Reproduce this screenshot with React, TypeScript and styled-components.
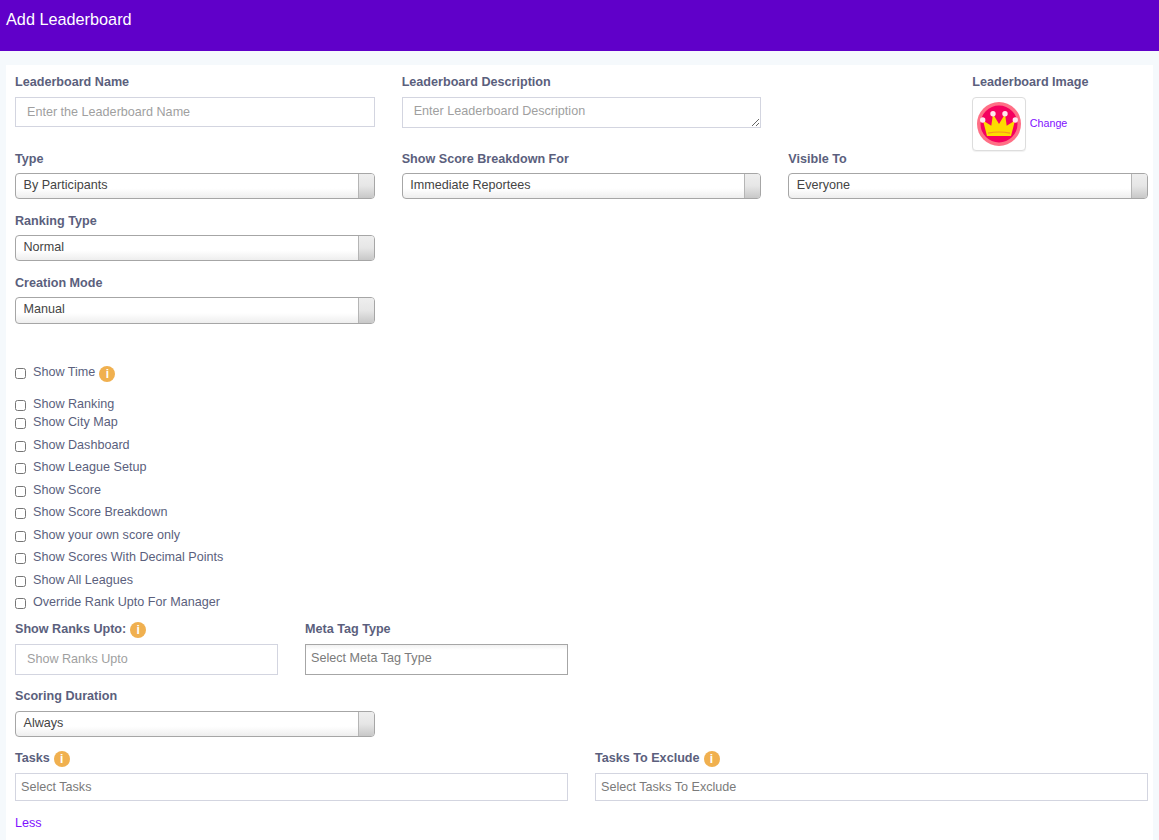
import React from "react";
import styled, { createGlobalStyle } from "styled-components";

const Global = createGlobalStyle`
  html, body { margin: 0; padding: 0; background: #f5f9fc; }
  body { font-family: "Liberation Sans", Arial, sans-serif; overflow: hidden; }
  * { box-sizing: border-box; }
`;

const Page = styled.div`
  width: 1159px;
  height: 840px;
  overflow: hidden;
  display: flex;
  flex-direction: column;
`;
const Header = styled.header`
  height: 51px;
  flex: none;
  background: #6000c9;
  color: #fff;
  font-size: 16.25px;
  line-height: 18px;
  padding: 10px 6px 0;
`;
const Panel = styled.main`
  margin: 14px 6px 0;
  padding: 9px 5px 0 9px;
  background: #fff;
  flex: 1;
  display: flex;
  flex-direction: column;
`;
const Grid3 = styled.div<{ $top?: number }>`
  display: grid;
  grid-template-columns: repeat(3, 1fr);
  column-gap: 27px;
  margin-top: ${(p) => p.$top ?? 0}px;
`;
const Grid2 = styled.div<{ $top?: number; $w?: number }>`
  display: grid;
  grid-template-columns: 1fr 1fr;
  column-gap: 27px;
  width: ${(p) => p.$w ?? 1133}px;
  margin-top: ${(p) => p.$top ?? 0}px;
`;
const Label = styled.div<{ $gap?: number }>`
  display: flex;
  align-items: flex-start;
  font-size: 12.6px;
  font-weight: 700;
  line-height: 17px;
  height: 15px;
  color: #5b5f7d;
  margin-bottom: ${(p) => p.$gap ?? 8}px;
`;
const TextInput = styled.input<{ $h?: number }>`
  display: block;
  width: 100%;
  height: ${(p) => p.$h ?? 30}px;
  border: 1px solid #d3d5e0;
  padding: 0 11px ${(p) => (p.$h ? 2 : 0)}px;
  font: 12.6px "Liberation Sans", Arial, sans-serif;
  background: #fff;
  outline: none;
  &::placeholder { color: #a09f9f; opacity: 1; }
`;
const TextArea = styled.textarea`
  display: block;
  width: 100%;
  height: 31px;
  border: 1px solid #d3d5e0;
  padding: 5px 11px;
  font: 12.6px/16px "Liberation Sans", Arial, sans-serif;
  outline: none;
  resize: vertical;
  &::placeholder { color: #a09f9f; opacity: 1; }
`;
const SelectBox = styled.div<{ $h?: number }>`
  display: flex;
  height: ${(p) => p.$h ?? 26}px;
  border: 1px solid #a6a6a6;
  border-radius: 4px;
  overflow: hidden;
  background: linear-gradient(to bottom, #fff 0%, #fff 60%, #eeeeee 100%);
  font-size: 12.6px;
  line-height: 22px;
  color: #444;
`;
const SelectText = styled.div`
  flex: 1;
  padding-left: 7.5px;
`;
const SelectArrow = styled.div`
  width: 16px;
  border-left: 1px solid #b5b5b5;
  background: linear-gradient(to bottom, #eeeeee 0%, #e6e6e6 50%, #c8c8c8 100%);
`;
const FieldStack = styled.div<{ $top?: number }>`
  width: 359.67px;
  margin-top: ${(p) => p.$top ?? 0}px;
`;
const ImageField = styled.div`
  padding-left: 184px;
  height: 0;
`;
const ImageRow = styled.div`
  display: flex;
  align-items: center;
`;
const Thumb = styled.div`
  width: 54px;
  height: 54px;
  flex: none;
  border: 1px solid #ddd;
  border-radius: 4px;
  background: #fff;
  box-shadow: 0 1px 1px rgba(0, 0, 0, 0.06);
  display: flex;
  align-items: center;
  justify-content: center;
`;
const Change = styled.a`
  margin-left: 3.5px;
  margin-top: -2px;
  font-size: 10.7px;
  color: #7f11ff;
`;
const Checks = styled.div`
  margin-top: 41px;
`;
const CheckRow = styled.label<{ $h: number }>`
  display: flex;
  align-items: flex-start;
  height: ${(p) => p.$h}px;
  font-size: 12.6px;
  line-height: 15px;
  color: #5b5f7d;
`;
const Box = styled.input.attrs({ type: "checkbox" })`
  width: 11px;
  height: 11px;
  margin: 3px 7px 0 0;
  flex: none;
`;
const Info = styled.span`
  display: inline-flex;
  align-items: center;
  justify-content: center;
  width: 16px;
  height: 16px;
  border-radius: 50%;
  margin: 1px 0 0 4px;
  background: #f0b04f;
  color: #fff;
  font-size: 12px;
  font-weight: 700;
  line-height: 16px;
  flex: none;
`;
const MetaSelect = styled.div`
  height: 31px;
  border: 1px solid #a6a6a6;
  padding: 5px 5px 0;
  font-size: 12.6px;
  line-height: 16px;
  color: #7b7b7b;
  background: linear-gradient(to bottom, #f1f1f1 0, #fff 5px);
`;
const TokenInput = styled.div`
  height: 28px;
  border: 1px solid #d3d5e0;
  padding: 5px 5px 0;
  font-size: 12.6px;
  line-height: 16px;
  color: #7b7b7b;
`;
const LessLink = styled.a`
  display: block;
  margin-top: 15px;
  font-size: 12.6px;
  line-height: 15px;
  color: #7f11ff;
`;

const Crown = () => (
  <svg width="46" height="46" viewBox="0 0 46 46" aria-hidden="true">
    <circle cx="23" cy="23" r="22" fill="#ff6f86" />
    <circle cx="23" cy="23" r="18.5" fill="#f5005f" />
    <path d="M7 19.5 L15.3 24.7 L17 13 L23 23 L29 13 L30.7 24.7 L39 19.5 L35 35 L11 35 Z" fill="#fddb00" />
    <path d="M12 32.2 Q23 29.8 34 32.2" fill="none" stroke="#f7931e" strokeWidth="1.2" />
    <circle cx="6.7" cy="19" r="2.7" fill="#ffe6ee" />
    <circle cx="17" cy="12.8" r="2.7" fill="#ffe6ee" />
    <circle cx="29" cy="12.8" r="2.7" fill="#ffe6ee" />
    <circle cx="39.3" cy="19" r="2.7" fill="#ffe6ee" />
  </svg>
);

const Select = ({ value, h }: { value: string; h?: number }) => (
  <SelectBox $h={h}>
    <SelectText>{value}</SelectText>
    <SelectArrow />
  </SelectBox>
);

const checks: { text: string; h: number; info?: boolean }[] = [
  { text: "Show Time", h: 32, info: true },
  { text: "Show Ranking", h: 18 },
  { text: "Show City Map", h: 23 },
  { text: "Show Dashboard", h: 22 },
  { text: "Show League Setup", h: 23 },
  { text: "Show Score", h: 22 },
  { text: "Show Score Breakdown", h: 23 },
  { text: "Show your own score only", h: 22 },
  { text: "Show Scores With Decimal Points", h: 23 },
  { text: "Show All Leagues", h: 22 },
  { text: "Override Rank Upto For Manager", h: 19 },
];

export default function App() {
  return (
    <Page>
      <Global />
      <Header>Add Leaderboard</Header>
      <Panel>
        <Grid3>
          <div>
            <Label>Leaderboard Name</Label>
            <TextInput placeholder="Enter the Leaderboard Name" />
          </div>
          <div>
            <Label>Leaderboard Description</Label>
            <TextArea placeholder="Enter Leaderboard Description" />
          </div>
          <ImageField>
            <Label>Leaderboard Image</Label>
            <ImageRow>
              <Thumb>
                <Crown />
              </Thumb>
              <Change>Change</Change>
            </ImageRow>
          </ImageField>
        </Grid3>
        <Grid3 $top={23}>
          <div>
            <Label $gap={7}>Type</Label>
            <Select value="By Participants" />
          </div>
          <div>
            <Label $gap={7}>Show Score Breakdown For</Label>
            <Select value="Immediate Reportees" />
          </div>
          <div>
            <Label $gap={7}>Visible To</Label>
            <Select value="Everyone" />
          </div>
        </Grid3>
        <FieldStack $top={14}>
          <Label $gap={7}>Ranking Type</Label>
          <Select value="Normal" />
        </FieldStack>
        <FieldStack $top={14}>
          <Label $gap={7}>Creation Mode</Label>
          <Select value="Manual" h={27} />
        </FieldStack>
        <Checks>
          {checks.map((c) => (
            <CheckRow key={c.text} $h={c.h}>
              <Box />
              {c.text}
              {c.info && <Info>i</Info>}
            </CheckRow>
          ))}
        </Checks>
        <Grid2 $w={553} $top={7}>
          <div>
            <Label>
              Show Ranks Upto:<Info>i</Info>
            </Label>
            <TextInput placeholder="Show Ranks Upto" $h={31} />
          </div>
          <div>
            <Label>Meta Tag Type</Label>
            <MetaSelect>Select Meta Tag Type</MetaSelect>
          </div>
        </Grid2>
        <FieldStack $top={13}>
          <Label>Scoring Duration</Label>
          <Select value="Always" />
        </FieldStack>
        <Grid2 $top={13}>
          <div>
            <Label>
              Tasks<Info>i</Info>
            </Label>
            <TokenInput>Select Tasks</TokenInput>
          </div>
          <div>
            <Label>
              Tasks To Exclude<Info>i</Info>
            </Label>
            <TokenInput>Select Tasks To Exclude</TokenInput>
          </div>
        </Grid2>
        <LessLink>Less</LessLink>
      </Panel>
    </Page>
  );
}
